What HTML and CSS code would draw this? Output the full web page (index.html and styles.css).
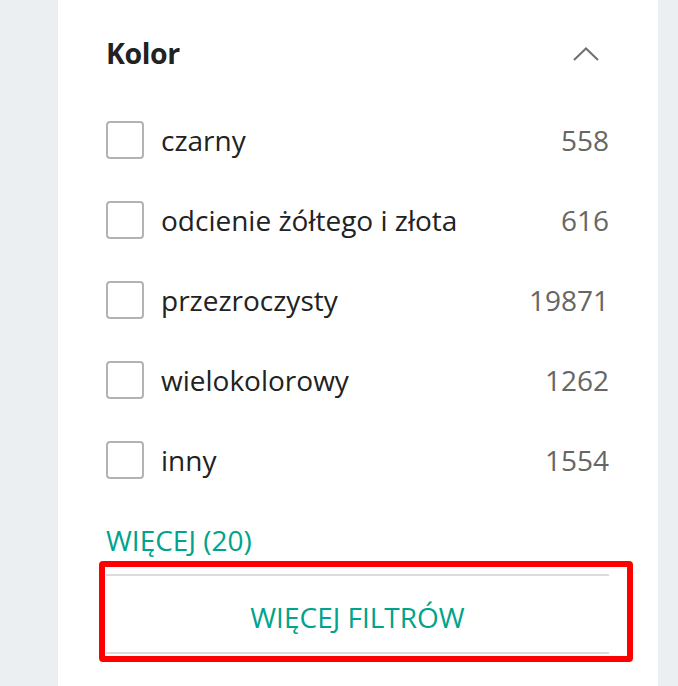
FILE: index.html
```html
<!DOCTYPE html>
<html lang="pl">
<head>
<meta charset="UTF-8">
<title>Kolor - filtry</title>
<link rel="stylesheet" href="styles.css">
</head>
<body>

<!-- Filter panel -->
<div class="panel">

    <div class="filter-head">
        <h2>Kolor</h2>
        <svg class="chevron" width="26" height="14" viewBox="0 0 26 14">
            <path d="M1 13 L13 1.5 L25 13" fill="none" stroke="#707070" stroke-width="2"/>
        </svg>
    </div>

    <ul class="options">
        <li class="option"><span class="box"></span><span class="label">czarny</span><span class="count">558</span></li>
        <li class="option"><span class="box"></span><span class="label">odcienie żółtego i złota</span><span class="count">616</span></li>
        <li class="option"><span class="box"></span><span class="label">przezroczysty</span><span class="count">19871</span></li>
        <li class="option"><span class="box"></span><span class="label">wielokolorowy</span><span class="count">1262</span></li>
        <li class="option"><span class="box"></span><span class="label">inny</span><span class="count">1554</span></li>
    </ul>

    <a class="more-link" href="#">WIĘCEJ (20)</a>

    <!-- highlighted button -->
    <div class="highlight">
        <button class="more-filters">WIĘCEJ FILTRÓW</button>
    </div>

</div>

</body>
</html>
```

FILE: styles.css
```css
/* Page */
html, body {
    margin: 0;
    padding: 0;
    height: 100%;
}

body {
    background-color: #eceff2;
    font-family: "Open Sans", sans-serif;
    color: #222;
    padding-left: 58px;
    box-sizing: border-box;
}

/* White filter column */
.panel {
    width: 600px;
    height: 100%;
    background-color: #fff;
    padding: 0 49px 0 48px;
    box-sizing: border-box;
}

/* Heading row */
.filter-head {
    display: flex;
    justify-content: space-between;
    align-items: center;
    height: 100px;
    padding-top: 5px;
    box-sizing: border-box;
}

.filter-head h2 {
    margin: 0;
    font-size: 28.5px;
    font-weight: 700;
    letter-spacing: -0.4px;
    color: #222;
}

.chevron {
    display: block;
    margin-right: 10px;
    margin-top: 2px;
}

/* Options list */
.options {
    list-style: none;
    margin: 0;
    padding: 0;
}

.option {
    display: flex;
    align-items: center;
    height: 80px;
    font-size: 28px;
}

.box {
    width: 38px;
    height: 38px;
    border: 2px solid #b3b3b3;
    border-radius: 4px;
    box-sizing: border-box;
    flex-shrink: 0;
}

.label {
    flex: 1;
    margin-left: 17px;
    color: #222;
}

.count {
    color: #666;
}

/* More link */
.more-link {
    display: block;
    margin-top: 20px;
    line-height: 40px;
    font-size: 28px;
    color: #00a38b;
    text-decoration: none;
}

/* Red annotation around the button */
.highlight {
    margin: 1px -24px 0 -7px;
    padding: 7px 18px 2px 1px;
    border: 6px solid #ff0000;
    border-radius: 4px;
}

.more-filters {
    display: block;
    width: 100%;
    height: 80px;
    padding: 6px 0 0 0;
    background: #fff;
    border: 0;
    border-top: 2px solid #dcdcdc;
    border-bottom: 2px solid #dcdcdc;
    font-family: "Open Sans", sans-serif;
    font-size: 28px;
    color: #00a38b;
    cursor: pointer;
}
```
